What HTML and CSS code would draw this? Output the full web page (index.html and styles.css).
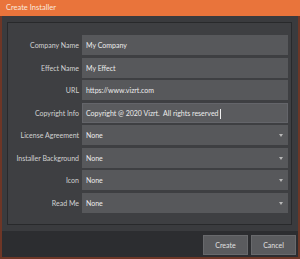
FILE: index.html
```html
<!DOCTYPE html>
<html>
<head>
    <title>Create Installer</title>
    <link rel="stylesheet" href="styles.css">
</head>
<body>
    <div class="titlebar">Create Installer</div>

    <div class="window">
        <!-- Installer fields -->
        <div class="panel">
            <label>Company Name</label>
            <div class="field">My Company</div>

            <label>Effect Name</label>
            <div class="field">My Effect</div>

            <label>URL</label>
            <div class="field">https://www.vizrt.com</div>

            <label>Copyright Info</label>
            <div class="field focused">Copyright @ 2020 Vizrt.&nbsp; All rights reserved<span class="caret"></span></div>

            <label>License Agreement</label>
            <div class="field select">None</div>

            <label>Installer Background</label>
            <div class="field select">None</div>

            <label>Icon</label>
            <div class="field select">None</div>

            <label>Read Me</label>
            <div class="field select">None</div>
        </div>

        <div class="footer">
            <button type="button">Create</button>
            <button type="button">Cancel</button>
        </div>
    </div>
</body>
</html>
```

FILE: styles.css
```css
body {
    margin: 0;
    width: 300px;
    height: 259px;
    background-color: #6e3626;
    font-family: Lato, "Noto Sans", sans-serif;
    overflow: hidden;
}
.titlebar {
    height: 16px;
    line-height: 16px;
    padding-left: 6px;
    background-color: #e9743b;
    color: #fbe9df;
    font-size: 7.5px;
}
.window {
    margin-left: 2px;
    width: 296px;
    height: 241px;
    background-color: #3a3b3e;
    display: flex;
    flex-direction: column;
}
.panel {
    margin: 6px 6px 0 5px;
    border: 1px solid #28292b;
    background-color: #3e3f42;
    padding: 12px 3px 0 0;
    box-sizing: border-box;
    height: 203px;
    display: grid;
    grid-template-columns: 71px 1fr;
    grid-auto-rows: 20px;
    column-gap: 3px;
    row-gap: 2.57px;
}
label {
    color: #d2d2d2;
    font-size: 7px;
    text-align: right;
    line-height: 20px;
    white-space: nowrap;
}
.field {
    background-color: #57585b;
    color: #ececec;
    font-size: 7px;
    line-height: 20px;
    padding-left: 4px;
    position: relative;
    white-space: nowrap;
}
.focused {
    background-color: #5a5b5e;
    box-shadow: inset 0 0 0 1px #64656a;
}
.caret {
    display: inline-block;
    width: 1px;
    height: 10px;
    background-color: #f0f0f0;
    vertical-align: middle;
    margin-left: 1px;
}
.select::after {
    content: "";
    position: absolute;
    right: 5px;
    top: 9px;
    border-left: 2.5px solid transparent;
    border-right: 2.5px solid transparent;
    border-top: 3px solid #b8b8b8;
}
.footer {
    margin-top: 6px;
    height: 26px;
    background-color: #2c2d30;
    display: flex;
    justify-content: flex-end;
    gap: 3px;
    padding: 4px 2px 0 0;
    box-sizing: border-box;
}
button {
    width: 45px;
    height: 20px;
    background-color: #5a5b5e;
    border: 1px solid #68696c;
    color: #e0e0e0;
    font-family: Lato, "Noto Sans", sans-serif;
    font-size: 7px;
    padding: 0;
}
```
